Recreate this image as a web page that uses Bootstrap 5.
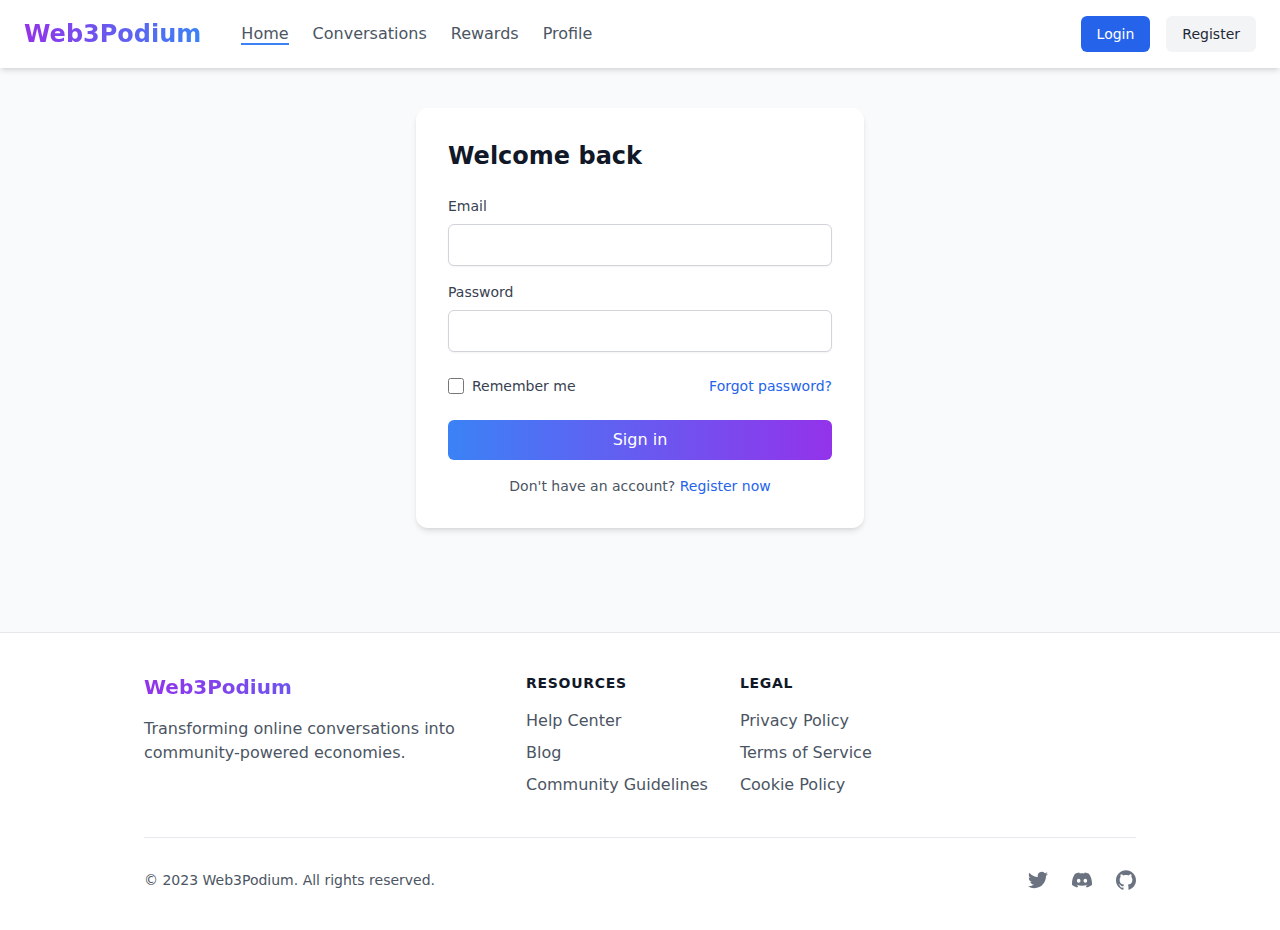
<!DOCTYPE html>
<html lang="en">
<head>
<meta charset="utf-8">
<meta name="viewport" content="width=device-width, initial-scale=1">
<title>Web3Podium</title>
<link href="https://cdn.jsdelivr.net/npm/bootstrap@5.3.0/dist/css/bootstrap.min.css" rel="stylesheet">
<style>
  body { font-family: "DejaVu Sans", sans-serif; background: #f9fafb; color: #111827; }
  a { color: #2563eb; text-decoration: none; }
  .site-header { background: #fff; }
  .site-header, .auth-card { box-shadow: 0 4px 6px -1px rgba(0,0,0,.1), 0 2px 4px -2px rgba(0,0,0,.1); }
  .brand { font-weight: 700; font-size: 24px; line-height: 36px; background: linear-gradient(to right, #9333ea, #3b82f6); -webkit-background-clip: text; background-clip: text; color: transparent; }
  .brand-footer { font-size: 20px; line-height: 28px; }
  .gap-nav { gap: 8px 24px; }
  .header-gap { gap: 8px 40px; }
  .muted-link, .muted-text { color: #4b5563; }
  .muted-link:hover { color: #2563eb; }
  .muted-link.current { border-bottom: 2px solid #3b82f6; }
  .text-14 { font-size: 14px; line-height: 20px; }
  .btn { border: 0; border-radius: 6px; padding: 8px 16px; }
  .btn-login, .btn-login:hover { background: #2563eb; color: #fff; }
  .btn-register, .btn-register:hover { background: #f3f4f6; color: #1f2937; }
  .btn-signin, .btn-signin:hover { background: linear-gradient(to right, #3b82f6, #9333ea); color: #fff; line-height: 24px; }
  .auth-main { padding: 40px 16px 104px; }
  .auth-card { max-width: 448px; padding: 32px; border: 0; border-radius: 12px; }
  .auth-title { font-size: 24px; line-height: 32px; font-weight: 700; }
  .field-label { color: #374151; }
  .field-box { height: 42px; border-color: #d1d5db; border-radius: 6px; box-shadow: 0 1px 2px rgba(0,0,0,.05); }
  .tick { width: 16px; height: 16px; margin: 0; }
  .site-footer { background: #fff; border-top: 1px solid #e5e7eb; }
  .footer-inner { max-width: 1024px; padding: 40px 16px; }
  .footer-grid { display: grid; grid-template-columns: minmax(0, 350px) max-content max-content; gap: 32px; padding-bottom: 40px; border-bottom: 1px solid #e5e7eb; }
  .footer-title { font-weight: 700; letter-spacing: .05em; text-transform: uppercase; }
  .social { color: #6b7280; }
  .social svg { display: block; width: 20px; height: 20px; }
  @media (max-width: 767px) { .footer-grid { grid-template-columns: 1fr; } }
</style>
</head>
<body class="d-flex flex-column min-vh-100">
<header class="site-header d-flex flex-wrap align-items-center justify-content-between gap-3 px-4 py-3 position-relative">
  <div class="d-flex flex-wrap align-items-center header-gap">
    <a class="brand" href="#">Web3Podium</a>
    <nav aria-label="Main">
      <ul class="list-unstyled d-flex flex-wrap gap-nav mb-0">
        <li><a class="muted-link current" href="#" aria-current="page">Home</a></li>
        <li><a class="muted-link" href="#">Conversations</a></li>
        <li><a class="muted-link" href="#">Rewards</a></li>
        <li><a class="muted-link" href="#">Profile</a></li>
      </ul>
    </nav>
  </div>
  <div class="d-flex gap-3">
    <button type="button" class="btn btn-login text-14">Login</button>
    <button type="button" class="btn btn-register text-14">Register</button>
  </div>
</header>

<main class="auth-main flex-grow-1">
  <div class="card auth-card mx-auto">
    <h1 class="auth-title mb-4">Welcome back</h1>
    <form>
      <div class="mb-3">
        <label class="field-label text-14 d-block mb-2" for="email">Email</label>
        <input class="form-control field-box" type="email" id="email" autocomplete="email">
      </div>
      <div class="mb-4">
        <label class="field-label text-14 d-block mb-2" for="password">Password</label>
        <input class="form-control field-box" type="password" id="password" autocomplete="current-password">
      </div>
      <div class="d-flex flex-wrap align-items-center justify-content-between text-14 mb-4">
        <div class="d-flex align-items-center gap-2">
          <input class="tick" type="checkbox" id="remember">
          <label class="field-label" for="remember">Remember me</label>
        </div>
        <a href="#">Forgot password?</a>
      </div>
      <button type="submit" class="btn btn-signin d-block w-100">Sign in</button>
    </form>
    <p class="muted-text text-14 text-center mt-3 mb-0">Don't have an account? <a href="#">Register now</a></p>
  </div>
</main>

<footer class="site-footer">
  <div class="footer-inner mx-auto w-100">
    <div class="footer-grid">
      <div>
        <div class="brand brand-footer mb-3">Web3Podium</div>
        <p class="muted-text mb-0">Transforming online conversations into community-powered economies.</p>
      </div>
      <div>
        <h2 class="footer-title text-14 mb-3">Resources</h2>
        <ul class="list-unstyled d-flex flex-column gap-2 mb-0">
          <li><a class="muted-link" href="#">Help Center</a></li>
          <li><a class="muted-link" href="#">Blog</a></li>
          <li><a class="muted-link" href="#">Community Guidelines</a></li>
        </ul>
      </div>
      <div>
        <h2 class="footer-title text-14 mb-3">Legal</h2>
        <ul class="list-unstyled d-flex flex-column gap-2 mb-0">
          <li><a class="muted-link" href="#">Privacy Policy</a></li>
          <li><a class="muted-link" href="#">Terms of Service</a></li>
          <li><a class="muted-link" href="#">Cookie Policy</a></li>
        </ul>
      </div>
    </div>
    <div class="d-flex flex-wrap align-items-center justify-content-between gap-3 mt-4 pt-2">
      <p class="muted-text text-14 mb-0">© 2023 Web3Podium. All rights reserved.</p>
      <div class="d-flex gap-4">
        <a class="social" href="#" aria-label="Twitter"><svg viewBox="0 0 24 24" fill="currentColor" aria-hidden="true"><path d="M23.953 4.57a10 10 0 01-2.825.775 4.958 4.958 0 002.163-2.723c-.951.555-2.005.959-3.127 1.184a4.92 4.92 0 00-8.384 4.482C7.69 8.095 4.067 6.13 1.64 3.162a4.822 4.822 0 00-.666 2.475c0 1.71.87 3.213 2.188 4.096a4.904 4.904 0 01-2.228-.616v.06a4.923 4.923 0 003.946 4.827 4.996 4.996 0 01-2.212.085 4.936 4.936 0 004.604 3.417 9.867 9.867 0 01-6.102 2.105c-.39 0-.779-.023-1.17-.067a13.995 13.995 0 007.557 2.209c9.053 0 13.998-7.496 13.998-13.985 0-.21 0-.42-.015-.63A9.935 9.935 0 0024 4.59z"/></svg></a>
        <a class="social" href="#" aria-label="Discord"><svg viewBox="0 0 24 24" fill="currentColor" aria-hidden="true"><path d="M20.317 4.3698a19.7913 19.7913 0 00-4.8851-1.5152.0741.0741 0 00-.0785.0371c-.211.3753-.4447.8648-.6083 1.2495-1.8447-.2762-3.68-.2762-5.4868 0-.1636-.3933-.4058-.8742-.6177-1.2495a.077.077 0 00-.0785-.037 19.7363 19.7363 0 00-4.8852 1.515.0699.0699 0 00-.0321.0277C.5334 9.0458-.319 13.5799.0992 18.0578a.0824.0824 0 00.0312.0561c2.0528 1.5076 4.0413 2.4228 5.9929 3.0294a.0777.0777 0 00.0842-.0276c.4616-.6304.8731-1.2952 1.226-1.9942a.076.076 0 00-.0416-.1057c-.6528-.2476-1.2743-.5495-1.8722-.8923a.077.077 0 01-.0076-.1277c.1258-.0943.2517-.1923.3718-.2914a.0743.0743 0 01.0776-.0105c3.9278 1.7933 8.18 1.7933 12.0614 0a.0739.0739 0 01.0785.0095c.1202.099.246.1981.3728.2924a.077.077 0 01-.0066.1276 12.2986 12.2986 0 01-1.873.8914.0766.0766 0 00-.0407.1067c.3604.698.7719 1.3628 1.225 1.9932a.076.076 0 00.0842.0286c1.961-.6067 3.9495-1.5219 6.0023-3.0294a.077.077 0 00.0313-.0552c.5004-5.177-.8382-9.6739-3.5485-13.6604a.061.061 0 00-.0312-.0286zM8.02 15.3312c-1.1825 0-2.1569-1.0857-2.1569-2.419 0-1.3332.9555-2.4189 2.157-2.4189 1.2108 0 2.1757 1.0952 2.1568 2.419 0 1.3332-.9555 2.4189-2.1569 2.4189zm7.9748 0c-1.1825 0-2.1569-1.0857-2.1569-2.419 0-1.3332.9554-2.4189 2.1569-2.4189 1.2108 0 2.1757 1.0952 2.1568 2.419 0 1.3332-.946 2.4189-2.1568 2.4189z"/></svg></a>
        <a class="social" href="#" aria-label="GitHub"><svg viewBox="0 0 24 24" fill="currentColor" aria-hidden="true"><path d="M12 .297c-6.63 0-12 5.373-12 12 0 5.303 3.438 9.8 8.205 11.385.6.113.82-.258.82-.577 0-.285-.01-1.04-.015-2.04-3.338.724-4.042-1.61-4.042-1.61C4.422 18.07 3.633 17.7 3.633 17.7c-1.087-.744.084-.729.084-.729 1.205.084 1.838 1.236 1.838 1.236 1.07 1.835 2.809 1.305 3.495.998.108-.776.417-1.305.76-1.605-2.665-.3-5.466-1.332-5.466-5.93 0-1.31.465-2.38 1.235-3.22-.135-.303-.54-1.523.105-3.176 0 0 1.005-.322 3.3 1.23.96-.267 1.98-.399 3-.405 1.02.006 2.04.138 3 .405 2.28-1.552 3.285-1.23 3.285-1.23.645 1.653.24 2.873.12 3.176.765.84 1.23 1.91 1.23 3.22 0 4.61-2.805 5.625-5.475 5.92.42.36.81 1.096.81 2.22 0 1.606-.015 2.896-.015 3.286 0 .315.21.69.825.57C20.565 22.092 24 17.592 24 12.297c0-6.627-5.373-12-12-12"/></svg></a>
      </div>
    </div>
  </div>
</footer>
<script src="https://cdn.jsdelivr.net/npm/bootstrap@5.3.0/dist/js/bootstrap.bundle.min.js"></script>
</body>
</html>
